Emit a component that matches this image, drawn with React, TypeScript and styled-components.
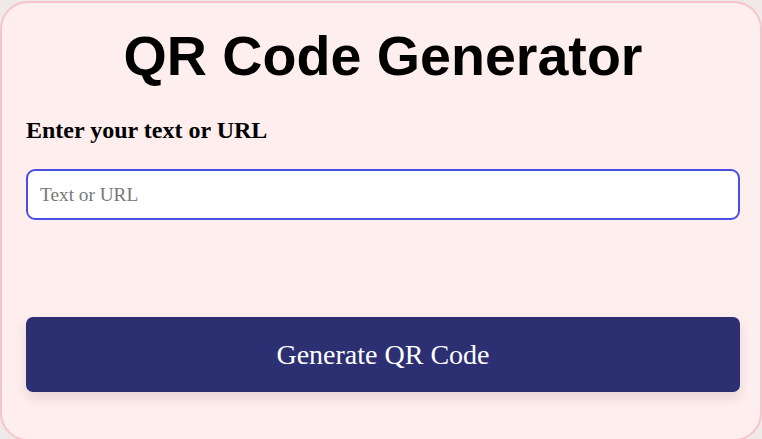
import React from "react";
import styled, { createGlobalStyle } from "styled-components";

const Global = createGlobalStyle`
  html, body { margin: 0; padding: 0; background: #efe9e9; }
  body { font-family: "Liberation Serif", "Times New Roman", serif; }
  * { box-sizing: border-box; }
`;

const Page = styled.div`
  padding-top: 1px;
  height: 439px;
  overflow: hidden;
`;

const Card = styled.div`
  width: 762px;
  min-height: 440px;
  background: #ffeeee;
  border: 2px solid #f6c5c9;
  border-radius: 28px;
  padding: 22px 20px 46px 24px;
  display: flex;
  flex-direction: column;
`;

const Title = styled.h1`
  margin: 0;
  font-family: "Liberation Sans", Arial, sans-serif;
  font-weight: 700;
  font-size: 55.6px;
  line-height: 63px;
  text-align: center;
  color: #000;
`;

const Label = styled.label`
  margin-top: 28px;
  font-family: "Liberation Serif", "Times New Roman", serif;
  font-weight: 700;
  font-size: 24px;
  line-height: 28px;
  color: #000;
`;

const Input = styled.input`
  margin-top: 25px;
  width: 100%;
  height: 51px;
  border: 2px solid #4a4fe4;
  border-radius: 9px;
  background: #fff;
  padding: 0 12px;
  font-family: "Liberation Serif", "Times New Roman", serif;
  font-size: 19.3px;
  color: #000;
  outline: none;
  &::placeholder { color: #777; }
`;

const Button = styled.button`
  margin-top: 97px;
  width: 100%;
  height: 75px;
  border: none;
  border-radius: 7px;
  background: #2d2f73;
  color: #fff;
  font-family: "Liberation Serif", "Times New Roman", serif;
  font-size: 28px;
  box-shadow: 0 6px 12px rgba(60, 30, 60, 0.12);
  cursor: pointer;
`;

export default function App() {
  return (
    <Page>
      <Global />
      <Card>
        <Title>QR Code Generator</Title>
        <Label htmlFor="qr-input">Enter your text or URL</Label>
        <Input id="qr-input" placeholder="Text or URL" />
        <Button>Generate QR Code</Button>
      </Card>
    </Page>
  );
}
